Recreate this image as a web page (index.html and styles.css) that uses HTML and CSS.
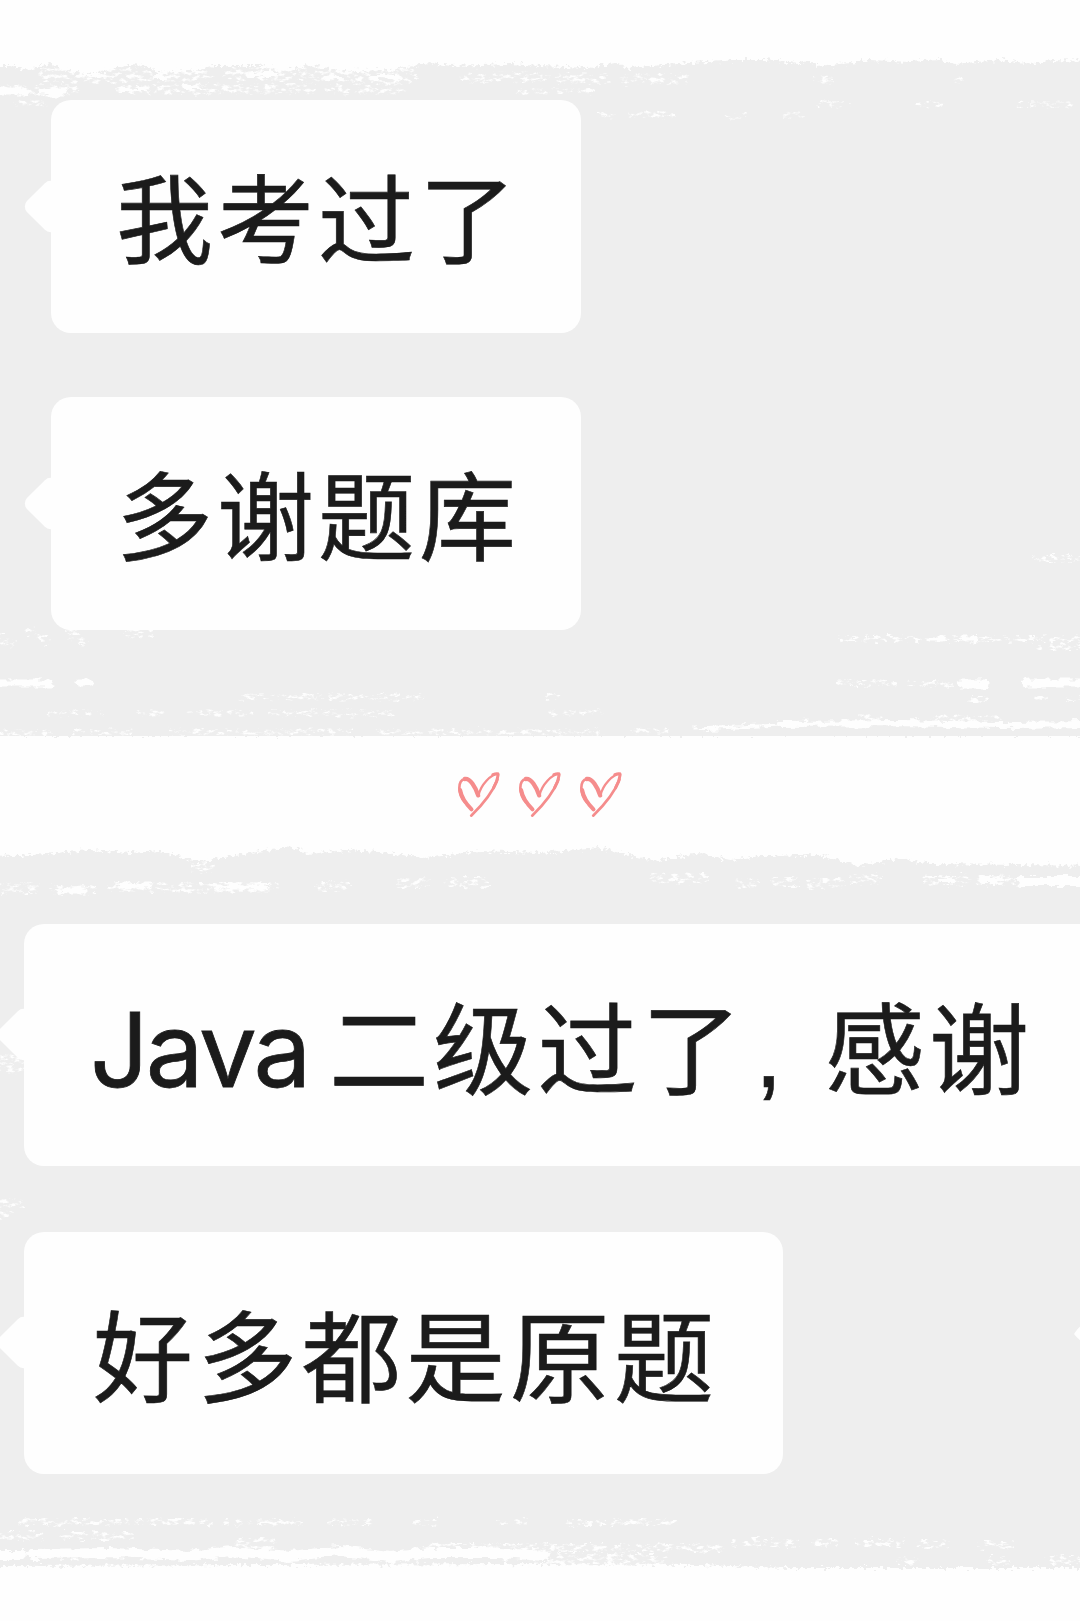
FILE: index.html
```
<!DOCTYPE html>
<html lang="zh-CN">
<head>
    <meta charset="utf-8">
    <title>题库反馈</title>
    <link rel="stylesheet" href="styles.css">
</head>
<body>
    <svg class="paint" width="1080" height="1621" viewBox="0 0 1080 1621">
        <defs>
            <filter id="edge" x="-5%" y="-5%" width="110%" height="110%">
                <feTurbulence type="fractalNoise" baseFrequency="0.25 0.3" numOctaves="3" seed="4"/>
                <feDisplacementMap in="SourceGraphic" scale="10" xChannelSelector="R" yChannelSelector="G"/>
            </filter>
            <filter id="dry" filterUnits="userSpaceOnUse" x="-20" y="0" width="1120" height="1621">
                <feTurbulence type="fractalNoise" baseFrequency="0.14 0.28" numOctaves="4" seed="9" result="n"/>
                <feDisplacementMap in="SourceGraphic" in2="n" scale="9" xChannelSelector="R" yChannelSelector="G" result="d"/>
                <feColorMatrix in="n" values="0 0 0 0 1  0 0 0 0 1  0 0 0 0 1  0 0 5 0 -2.4" result="m"/>
                <feComposite in="d" in2="m" operator="in"/>
            </filter>
            <filter id="soft" filterUnits="userSpaceOnUse" x="-20" y="0" width="1120" height="1621">
                <feTurbulence type="fractalNoise" baseFrequency="0.1 0.2" numOctaves="3" seed="2"/>
                <feDisplacementMap in="SourceGraphic" scale="9" xChannelSelector="R" yChannelSelector="G"/>
            </filter>
        </defs>

        <!-- grey brush areas -->
        <g class="grey" filter="url(#edge)">
            <path d="M-20 66L10 66L30 70L50 63L60 70L95 74L130 65L145 66L160 73L200 70L215 66L260 66L280 71L310 65L345 71L390 70L430 63L450 66L510 64L540 66L590 68L617 63L627 68L690 63L740 60L765 60L800 63L810 61L817 66L850 63L870 60L910 62L940 60L955 64L1000 60L1035 64L1050 60L1100 61V735H-20Z"/>
            <path d="M-20 855L20 856L90 850L130 853L160 851L200 862L230 856L290 847L310 854L345 850L380 852L425 858L480 851L540 853L600 848L655 861L700 853L730 860L760 856L820 855L860 866L900 858L930 864L1100 866V1568L790 1568L700 1565L540 1564L-20 1566Z"/>
        </g>
        <path class="grey" d="M0 110H1080V736H0ZM0 900H1080V1540H0Z"/>

        <!-- dry bristle marks -->
        <g class="mark" filter="url(#dry)">
            <path stroke-width="15" d="M45 75H130M140 74H205M230 73H290M305 74H345M355 75H410"/>
            <path stroke-width="9" d="M465 77H545M560 79H605M625 79H685M0 90H75M120 89H310M330 89H400"/>
            <path stroke-width="5" d="M15 103H45M520 91H590M815 80H830M955 80H961M820 104H850M920 105H940M1020 105H1070M600 115H612M630 115H672M728 116H745M785 116H800"/>
            <path stroke-width="9" d="M0 638L10 643M28 630L45 640M70 632L82 642M130 633H150"/>
            <path stroke-width="5" d="M240 697H420M548 697H556M50 713H100M140 713H160M190 713H250M270 713H390M550 713H600M0 733H50M75 732H130M170 732H350M380 732H600"/>
            <path stroke-width="6" d="M1035 558H1056M1064 558H1080M842 639H920M945 639H1080M1040 647H1080M840 683H895M910 684H950M1035 699H1046M1070 699H1080M970 699H985"/>
            <path stroke-width="5" d="M635 731H665M860 718H880M935 719H1000"/>
            <path stroke-width="10" d="M0 888H35M55 890H92M112 887H165M175 888H275M195 867H210M320 886H345M400 883H425M450 883H485M655 878H705M740 883H755M775 882H795M810 883H840M853 879H875M928 880H965M978 880H1012"/>
            <path stroke-width="11" d="M0 1060H24M0 1068H22M0 1204H18M0 1213H6"/>
            <path stroke-width="6" d="M20 1522H210M225 1522H300M330 1522H370M415 1522H435M500 1522H525M570 1523H675"/>
            <path stroke-width="8" d="M0 1536H40M65 1536H130M540 1548H720M735 1543H795M815 1543H835M860 1543H900M920 1543H945M980 1545H1010M900 1561H915M990 1561H1006M1050 1560H1080"/>
            <path stroke-width="12" d="M540 1560H660M240 1543H270M430 1549H545"/>
        </g>
        <g class="mark" filter="url(#soft)">
            <path stroke-width="7" d="M0 683H50M80 683H92M0 91H25M40 92H65"/>
            <path stroke-width="4" d="M85 75H98M155 77H165M250 74H275M325 78H340M370 77H400M120 90H145M185 87H200"/>
            <path stroke-width="5" d="M929 639H941M963 639H975M65 890H85M120 886H150M215 887H265"/>
            <path stroke-width="9" d="M961 684H984M1028 683H1090"/>
            <path stroke-width="3" d="M695 729L760 726L800 724"/>
            <path stroke-width="6" d="M780 724L900 723L1000 725L1090 724M940 881H950M982 880H1000"/>
            <path stroke-width="10" d="M1022 881H1090M-10 1555H22M32 1554L110 1553L190 1556L230 1551L290 1556L340 1551L390 1557L430 1553L500 1553L545 1556"/>
        </g>
        <path class="tip" d="M1074 1334Q1080 1324 1090 1320V1346Q1080 1342 1074 1334Z"/>
    </svg>

    <div class="chat chat-top">
        <div class="bubble">我考过了</div>
        <div class="bubble">多谢题库</div>
    </div>

    <div class="hearts">
        <svg class="heart" viewBox="0 0 140 150"><use href="#heart"/>
            <defs>
                <g id="heart">
                    <path stroke-width="13" d="M66 76C58 52 42 24 26 27"/>
                    <path stroke-width="8" d="M26 27C4 31 4 72 26 97"/>
                    <path stroke-width="12" d="M12 60C16 84 30 102 46 118"/>
                    <path stroke-width="7" d="M67 76C74 44 104 13 126 11"/>
                    <path stroke-width="9" d="M110 14Q125 8 126 14Q124 34 112 54"/>
                    <path stroke-width="8" d="M124 28C112 60 82 102 45 137"/>
                </g>
            </defs>
        </svg>
        <svg class="heart" viewBox="0 0 140 150"><use href="#heart"/></svg>
        <svg class="heart" viewBox="0 0 140 150"><use href="#heart"/></svg>
    </div>

    <div class="chat chat-bottom">
        <div class="bubble wide"><span class="latin">Java</span>二级过了<span class="comma">,</span>感谢</div>
        <div class="bubble">好多都是原题</div>
    </div>
</body>
</html>
```

FILE: styles.css
```
body {
    position: relative;
    width: 1080px;
    height: 1621px;
    margin: 0;
    overflow: hidden;
    background: #fefefe;
    color: #1b1b1b;
    font-family: "Noto Sans CJK SC", sans-serif;
}
.paint {
    position: absolute;
    top: 0;
    left: 0;
    z-index: -1;
}
.grey {
    fill: #eeeeee;
}
.mark {
    fill: none;
    stroke: #fefefe;
    stroke-linecap: round;
}
.tip {
    fill: #fefefe;
}
.chat {
    display: flex;
    flex-direction: column;
    align-items: flex-start;
}
.chat-top {
    gap: 64px;
    padding: 100px 0 0 51px;
}
.chat-bottom {
    gap: 66px;
    padding: 104px 0 0 24px;
}
.bubble {
    position: relative;
    box-sizing: border-box;
    width: 530px;
    height: 233px;
    padding-left: 65px;
    border-radius: 20px;
    background: #fefefe;
    font-size: 97px;
    line-height: 227px;
    letter-spacing: 4px;
    white-space: nowrap;
    -webkit-text-stroke: 0.6px #1b1b1b;
}
.bubble::before {
    content: "";
    position: absolute;
    top: 86px;
    left: -21px;
    width: 41px;
    height: 41px;
    border-radius: 8px;
    background: #fefefe;
    transform: rotate(45deg);
}
.chat-bottom .bubble {
    width: 759px;
    height: 242px;
    padding-left: 69px;
    font-size: 100px;
    line-height: 239px;
    letter-spacing: 4.2px;
}
.chat-bottom .bubble::before {
    top: 90px;
}
.chat-bottom .wide {
    width: 1100px;
    padding-left: 66px;
}
.latin {
    display: inline-block;
    width: 239px;
    font-family: Inter, sans-serif;
    font-size: 103px;
    letter-spacing: -3px;
    -webkit-text-stroke: 0.8px #1b1b1b;
}
.comma {
    display: inline-block;
    width: 79px;
    font-family: "Liberation Sans", sans-serif;
    text-indent: 9px;
}
.hearts {
    display: flex;
    justify-content: center;
    gap: 14px;
    height: 50px;
    padding-top: 140px;
}
.heart {
    width: 47px;
    height: 50px;
    fill: none;
    stroke: #f58c8c;
    stroke-linecap: round;
}
```
